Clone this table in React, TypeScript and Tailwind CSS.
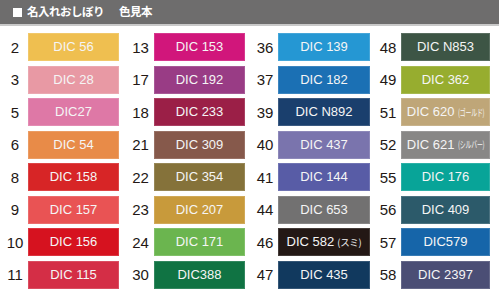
const columns = [
    {
        gap: 'ml-0',
        num: 'w-[28px] pl-[2px]',
        sw: 'w-[91px]',
        items: [
            { no: '2', name: 'DIC 56', color: '#efbf50' },
            { no: '3', name: 'DIC 28', color: '#e899a4' },
            { no: '5', name: 'DIC27', color: '#de78a6' },
            { no: '6', name: 'DIC 54', color: '#e88b48' },
            { no: '8', name: 'DIC 158', color: '#d72526' },
            { no: '9', name: 'DIC 157', color: '#e95354' },
            { no: '10', name: 'DIC 156', color: '#d6121f' },
            { no: '11', name: 'DIC 115', color: '#d42e46' },
        ],
    },
    {
        gap: 'ml-[8px]',
        num: 'w-[27px]',
        sw: 'w-[91px]',
        items: [
            { no: '13', name: 'DIC 153', color: '#d1167b' },
            { no: '17', name: 'DIC 192', color: '#993c85' },
            { no: '18', name: 'DIC 233', color: '#9b1f47' },
            { no: '21', name: 'DIC 309', color: '#86594b' },
            { no: '22', name: 'DIC 354', color: '#85723a' },
            { no: '23', name: 'DIC 207', color: '#c89a3b' },
            { no: '24', name: 'DIC 171', color: '#6bb54f' },
            { no: '30', name: 'DIC388', color: '#107343' },
        ],
    },
    {
        gap: 'ml-[7px]',
        num: 'w-[26px]',
        sw: 'w-[92px]',
        items: [
            { no: '36', name: 'DIC 139', color: '#2597d3' },
            { no: '37', name: 'DIC 182', color: '#1b70b4' },
            { no: '39', name: 'DIC N892', color: '#1a3f6d' },
            { no: '40', name: 'DIC 437', color: '#7a74ad' },
            { no: '41', name: 'DIC 144', color: '#585ca6' },
            { no: '44', name: 'DIC 653', color: '#727171' },
            { no: '46', name: 'DIC 582', sub: '(スミ)', color: '#231815' },
            { no: '47', name: 'DIC 435', color: '#11395e' },
        ],
    },
    {
        gap: 'ml-[5px]',
        num: 'w-[26px]',
        sw: 'w-[89px]',
        items: [
            { no: '48', name: 'DIC N853', color: '#3d5545' },
            { no: '49', name: 'DIC 362', color: '#97ad2f' },
            { no: '51', name: 'DIC 620', sub: '(ゴールド)', narrow: true, color: '#bfa678' },
            { no: '52', name: 'DIC 621', sub: '(シルバー)', narrow: true, color: '#888786' },
            { no: '55', name: 'DIC 176', color: '#08a498' },
            { no: '56', name: 'DIC 409', color: '#2c5a6a' },
            { no: '57', name: 'DIC579', color: '#1665a9' },
            { no: '58', name: 'DIC 2397', color: '#4b4e75' },
        ],
    },
]

export default function App() {
    return (
        <div className="h-[300px] w-[499px] bg-white font-['Liberation_Sans','Noto_Sans_CJK_JP',sans-serif]">
            <div className="flex h-[26px] items-center border-b-2 border-[#c9c9c9] bg-[#6e6d6d] pl-[13px] text-[11.5px] font-bold text-white">
                <span className="mr-[5px] inline-block h-[9px] w-[9px] bg-white" />
                <span className="font-['Noto_Sans_CJK_JP',sans-serif] tracking-[-0.5px]">名入れおしぼり</span>
                <span className="ml-[15px] font-['Noto_Sans_CJK_JP',sans-serif] tracking-[-0.5px]">色見本</span>
            </div>

            <div className="mt-[7px] flex">
                {columns.map((col, ci) => (
                    <div key={ci} className={`flex flex-col gap-[4.5px] ${col.gap}`}>
                        {col.items.map((item) => (
                            <div key={item.no} className="flex h-[28px] items-center">
                                <div className={`${col.num} text-center text-[15px] leading-none text-[#231815]`}>{item.no}</div>
                                <div
                                    className={`${col.sw} flex h-full items-center justify-center whitespace-nowrap text-[13px] text-[#f5f5f5] shadow-[inset_0_0_0_1px_rgba(255,255,255,0.15)]`}
                                    style={{ backgroundColor: item.color }}
                                >
                                    {item.name}
                                    {item.sub &&
                                        (item.narrow ? (
                                            <span className="ml-[3px] mr-[-16px] inline-block origin-left scale-x-[0.62] font-['Noto_Sans_CJK_JP',sans-serif] text-[9.5px] tracking-[-0.3px]">
                                                {item.sub}
                                            </span>
                                        ) : (
                                            <span className="ml-[3px] font-['Noto_Sans_CJK_JP',sans-serif] text-[9.5px] tracking-[-0.3px]">{item.sub}</span>
                                        ))}
                                </div>
                            </div>
                        ))}
                    </div>
                ))}
            </div>
        </div>
    )
}
